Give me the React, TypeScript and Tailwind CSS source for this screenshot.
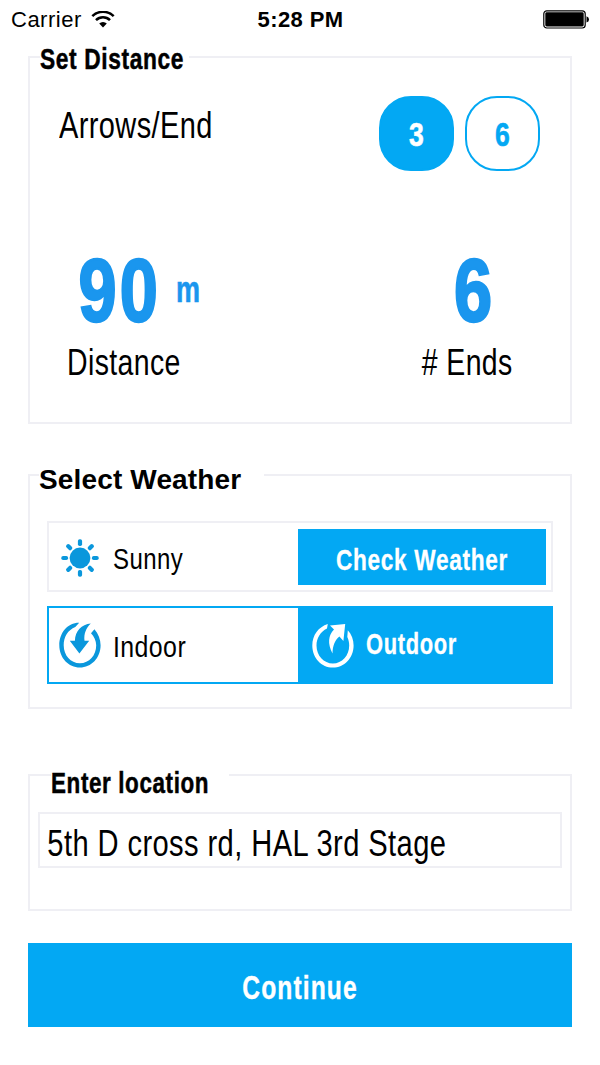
import React, { useState } from 'react';
import clsx from 'clsx';

interface PanelProps {
  title: string;
  className: string;
  legendClassName: string;
  titleClassName?: string;
  children: React.ReactNode;
}

// Bordered group whose title sits on the top edge
function Panel({ title, className, legendClassName, titleClassName, children }: PanelProps) {
  return (
    <section className={clsx('relative mx-7 border-2 border-[#efeff4]', className)}>
      <h2 className={clsx('absolute h-8 bg-white leading-8 font-bold whitespace-nowrap', legendClassName)}>
        <span className={clsx('inline-block origin-left', titleClassName)}>{title}</span>
      </h2>
      {children}
    </section>
  );
}

function WifiIcon() {
  return (
    <svg className="w-6 h-[18px]" viewBox="0 0 24 18" fill="none" stroke="#000" strokeWidth="2.5">
      <path d="M1.3 5.2a15.2 15.2 0 0 1 21.4 0" />
      <path d="M5 9.2a9.8 9.8 0 0 1 14 0" />
      <path d="M12 16.4 8.2 12.6a5.4 5.4 0 0 1 7.6 0Z" fill="#000" stroke="none" />
    </svg>
  );
}

function BatteryIcon() {
  return (
    <svg className="w-[47px] h-[19px]" viewBox="0 0 47 19">
      <rect x="0.8" y="0.8" width="41.4" height="17.2" rx="3" fill="none" stroke="#000" strokeWidth="1.2" />
      <rect x="2.3" y="2.3" width="38.4" height="14.2" rx="1.4" />
      <path d="M43.5 6.2q2.5.9 2.5 3.2t-2.5 3.2Z" />
    </svg>
  );
}

const rays = [0, 45, 90, 135, 180, 225, 270, 315];

function SunIcon() {
  return (
    <svg className="mt-px w-[38px] h-[38px]" viewBox="-19 -19 38 38" fill="#0a97dc">
      <circle r="10.4" />
      {rays.map((angle) => (
        <rect key={angle} x="-2.1" y="-18.7" width="4.2" height="6.8" rx="1.8" transform={`rotate(${angle})`} />
      ))}
    </svg>
  );
}

function IndoorIcon() {
  return (
    <svg className="w-[42px] h-[46px]" viewBox="0 0 42 46" fill="#0a97dc">
      <path d="M20.2.8C9 .6.3 10.500.3 23.300.3 36 9.600 45.600 20.900 45.600S41.600 36 41.600 23.300c0-6-2.300-11.500-6.200-16.100L32 11.300c3 3.200 5.200 7.500 5.200 12 0 10.200-7 18-16.300 18S4.700 33.500 4.700 23.300c0-8.300 4.300-15.300 11.600-18.200Z" />
      <path d="M31.800 1.600C22.500 2.500 16.200 9 15.900 18.800h-5.100L20.400 31.500l9.800-12.700h-4.700C24.800 12 26.800 6.500 31.800 1.600Z" />
    </svg>
  );
}

function OutdoorIcon() {
  return (
    <svg className="w-[42px] h-[46px]" viewBox="0 0 42 46" fill="#fff">
      <path d="M15.800 2C6.500 5 .3 13 .3 23.500.3 36 9.600 45.600 20.900 45.600S41.600 36 41.600 23.500c0-6.200-2-11-5.800-15.300L35.300 15c1.300 2.700 1.900 5.500 1.900 8.500 0 10.200-7.200 18-16.300 18S4.500 33.700 4.500 23.500c0-7.500 4-13.800 10.500-17Z" />
      <path d="M18 3.500 33.200 2 31.400 19l-4-4.500C22.500 18.500 20.700 24 20.500 31.500 15.300 21.500 16.300 13.500 22 7.600Z" />
    </svg>
  );
}

const arrowOptions = [3, 6];

export default function App() {
  const [arrows, setArrows] = useState(3);
  const [location, setLocation] = useState('5th D cross rd, HAL 3rd Stage');

  return (
    <div className="w-[600px] h-[1065px] overflow-hidden bg-white text-black font-['Liberation_Sans',Arial,sans-serif]">
      {/* Status bar */}
      <header className="h-14 grid grid-cols-3 items-start pt-[10px] pl-[11px] pr-[10px]">
        <div className="flex items-center gap-[9px]">
          <span className="text-[22px] leading-5 tracking-[0.5px]">Carrier</span>
          <WifiIcon />
        </div>
        <span className="text-center text-[22px] leading-5 font-bold tracking-[0.4px]">5:28 PM</span>
        <div className="flex justify-end">
          <BatteryIcon />
        </div>
      </header>

      {/* Distance */}
      <Panel
        title="Set Distance"
        className="h-[368px] pt-[38px]"
        legendClassName="left-[10px] -top-[15px] w-[149px] text-[29px]"
        titleClassName="scale-x-[0.784] tracking-[0.8px] [-webkit-text-stroke:0.5px]"
      >
        <div className="flex justify-between pl-[29px] pr-[30px]">
          <span className="w-[160px] h-[60px] leading-[60px] text-[36px] tracking-[0.5px] whitespace-nowrap origin-left scale-x-[0.805]">
            Arrows/End
          </span>
          <div className="flex gap-[11px]">
            {arrowOptions.map((count) => (
              <button
                key={count}
                onClick={() => setArrows(count)}
                className={clsx(
                  'size-[75px] rounded-[32px] border-2 border-[#03a8f3] text-[34px] leading-none font-bold',
                  arrows === count ? 'bg-[#03a8f3] text-white' : 'bg-white text-[#03a8f3]',
                )}
              >
                <span className="inline-block scale-x-[0.78] [-webkit-text-stroke:0.6px]">{count}</span>
              </button>
            ))}
          </div>
        </div>

        <div className="mt-[71px] flex justify-between pl-[37px] pr-[57px]">
          <div className="w-[150px]">
            <div className="flex h-[96px] text-[#1a96ee] font-bold">
              <span className="w-[109px] pl-[15px] text-[89px] leading-[97px] tracking-[4px] [-webkit-text-stroke:2.5px] origin-left scale-x-[0.77]">
                90
              </span>
              <span className="text-[36px] leading-[96px] [-webkit-text-stroke:0.6px] origin-left scale-x-[0.75]">m</span>
            </div>
            <p className="mt-[2px] h-[46px] text-[36px] leading-[46px] tracking-[0.5px] whitespace-nowrap origin-left scale-x-[0.79]">
              Distance
            </p>
          </div>
          <div className="w-[92px]">
            <p className="h-[96px] pl-[16px] text-center text-[89px] leading-[97px] font-bold text-[#1a96ee] [-webkit-text-stroke:2.5px] scale-x-[0.77]">
              6
            </p>
            <p className="mt-[2px] h-[46px] pl-px text-[36px] leading-[46px] tracking-[0.5px] whitespace-nowrap origin-left scale-x-[0.79]">
              # Ends
            </p>
          </div>
        </div>
      </Panel>

      {/* Weather */}
      <Panel
        title="Select Weather"
        className="mt-[50px] h-[235px] px-[17px] pt-[45px]"
        legendClassName="left-[9px] -top-[12px] w-[225px] text-[28px] tracking-[0.15px]"
      >
        <div className="flex h-[71px] border-2 border-[#efeff4] pt-[6px] pb-[5px] pr-[5px]">
          <div className="flex w-[249px] items-center pl-3">
            <SunIcon />
            <span className="ml-3.5 pt-1 text-[30px] leading-9 tracking-[0.5px] origin-left scale-x-[0.8]">Sunny</span>
          </div>
          <button className="h-[56px] flex-1 bg-[#03a8f3] text-[30px] leading-[56px] font-bold text-white">
            <span className="inline-block pt-[3px] whitespace-nowrap -mx-8 tracking-[0.9px] [-webkit-text-stroke:0.3px] scale-x-[0.755]">
              Check Weather
            </span>
          </button>
        </div>

        <div className="mt-[14px] flex h-[78px] border-2 border-[#03a8f3]">
          <button className="flex w-[249px] items-center pl-[10px] text-left">
            <IndoorIcon />
            <span className="ml-3 pt-1 text-[30px] leading-9 tracking-[0.5px] origin-left scale-x-[0.83]">Indoor</span>
          </button>
          <button className="flex flex-1 items-center bg-[#03a8f3] pl-[14px] text-left text-white">
            <OutdoorIcon />
            <span className="ml-3 -mt-0.5 text-[30px] leading-9 font-bold tracking-[0.9px] [-webkit-text-stroke:0.3px] origin-left scale-x-[0.73]">
              Outdoor
            </span>
          </button>
        </div>
      </Panel>

      {/* Location */}
      <Panel
        title="Enter location"
        className="mt-[65px] h-[137px] px-2 pt-9"
        legendClassName="left-[21px] -top-[9px] w-[178px] text-[29px]"
        titleClassName="scale-x-[0.773] tracking-[0.8px] [-webkit-text-stroke:0.5px]"
      >
        <div className="h-14 border-2 border-[#efeff4] overflow-hidden">
          <input
            type="text"
            value={location}
            onChange={(e) => setLocation(e.target.value)}
            className="block h-[60px] w-[600px] bg-transparent pl-[9px] text-[36px] leading-[60px] tracking-[0.5px] origin-left scale-x-[0.809] focus:outline-none"
          />
        </div>
      </Panel>

      <button className="mx-7 mt-8 block h-[84px] w-[544px] bg-[#03a8f3] text-[34px] leading-[84px] font-bold text-white">
        <span className="block h-[84px] leading-[88px] tracking-[1.5px] [-webkit-text-stroke:0.4px] scale-x-[0.725]">Continue</span>
      </button>
    </div>
  );
}
